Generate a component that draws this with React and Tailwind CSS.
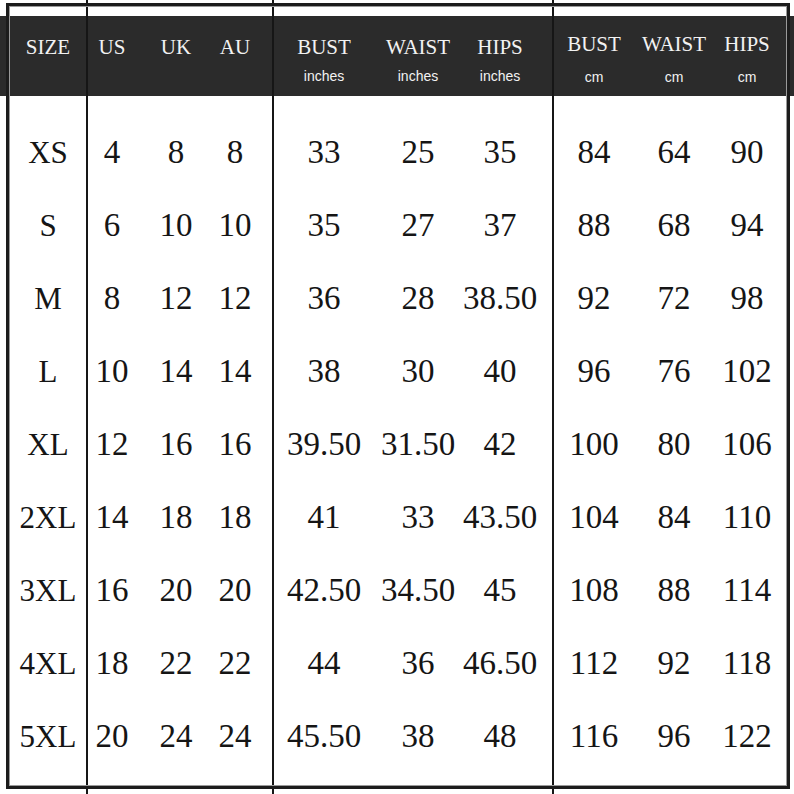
const rows = [
  ['XS', '4', '8', '8', '33', '25', '35', '84', '64', '90'],
  ['S', '6', '10', '10', '35', '27', '37', '88', '68', '94'],
  ['M', '8', '12', '12', '36', '28', '38.50', '92', '72', '98'],
  ['L', '10', '14', '14', '38', '30', '40', '96', '76', '102'],
  ['XL', '12', '16', '16', '39.50', '31.50', '42', '100', '80', '106'],
  ['2XL', '14', '18', '18', '41', '33', '43.50', '104', '84', '110'],
  ['3XL', '16', '20', '20', '42.50', '34.50', '45', '108', '88', '114'],
  ['4XL', '18', '22', '22', '44', '36', '46.50', '112', '92', '118'],
  ['5XL', '20', '24', '24', '45.50', '38', '48', '116', '96', '122'],
]

const serif = "font-['Liberation_Serif',serif]"
const sans = "font-['Liberation_Sans',Arial,sans-serif]"

function Cell({ children, size = 'text-[33px]' }) {
  return (
    <div className={`flex h-[73px] items-center justify-center whitespace-nowrap leading-none text-[#151515] ${serif} ${size}`}>
      {children}
    </div>
  )
}

function HeadLabel({ children, sub, subGap, top }) {
  return (
    <div className={`flex flex-col items-center whitespace-nowrap ${top}`}>
      <span className={`text-[21px] leading-none text-[#f2f2f2] ${serif}`}>{children}</span>
      {sub && (
        <span className={`text-[14px] leading-none text-[#f2f2f2] ${sans} ${subGap}`}>{sub}</span>
      )}
    </div>
  )
}

export default function App() {
  return (
    <div className="relative flex h-[794px] w-[794px] overflow-hidden bg-white">
      {/* size */}
      <div className="flex h-full w-[86px] flex-col">
        <div className="h-[16px]" />
        <div className="flex h-[80px] justify-center bg-[#2b2b2b] pl-[10px]">
          <HeadLabel top="pt-[21px]">SIZE</HeadLabel>
        </div>
        <div className="flex flex-col pl-[10px] pt-[20px]">
          {rows.map((r) => (
            <Cell key={r[0]} size="text-[31px]">{r[0]}</Cell>
          ))}
        </div>
      </div>

      {/* us / uk / au */}
      <div className="flex h-full w-[186px] flex-col border-l-2 border-[#161616]">
        <div className="h-[16px]" />
        <div className="grid h-[80px] grid-cols-[48px_80px_38px] bg-[#2b2b2b]">
          {['US', 'UK', 'AU'].map((h) => (
            <div key={h} className="flex justify-center">
              <HeadLabel top="pt-[21px]">{h}</HeadLabel>
            </div>
          ))}
        </div>
        <div className="grid grid-cols-[48px_80px_38px] pt-[20px]">
          {rows.map((r) =>
            r.slice(1, 4).map((v, i) => <Cell key={r[0] + i}>{v}</Cell>)
          )}
        </div>
      </div>

      {/* inches */}
      <div className="flex h-full w-[280px] flex-col border-l-2 border-[#161616]">
        <div className="h-[16px]" />
        <div className="grid h-[80px] grid-cols-[100px_88px_76px] bg-[#2b2b2b]">
          {['BUST', 'WAIST', 'HIPS'].map((h) => (
            <div key={h} className="flex justify-center">
              <HeadLabel top="pt-[21px]" sub="inches" subGap="mt-[11px]">{h}</HeadLabel>
            </div>
          ))}
        </div>
        <div className="grid grid-cols-[100px_88px_76px] pt-[20px]">
          {rows.map((r) =>
            r.slice(4, 7).map((v, i) => <Cell key={r[0] + i}>{v}</Cell>)
          )}
        </div>
      </div>

      {/* cm */}
      <div className="flex h-full flex-1 flex-col border-l-2 border-[#161616]">
        <div className="h-[16px]" />
        <div className="grid h-[80px] grid-cols-[80px_80px_66px] bg-[#2b2b2b]">
          {['BUST', 'WAIST', 'HIPS'].map((h) => (
            <div key={h} className="flex justify-center">
              <HeadLabel top="pt-[18px]" sub="cm" subGap="mt-[15px]">{h}</HeadLabel>
            </div>
          ))}
        </div>
        <div className="grid grid-cols-[80px_80px_66px] pt-[20px]">
          {rows.map((r) =>
            r.slice(7, 10).map((v, i) => <Cell key={r[0] + i}>{v}</Cell>)
          )}
        </div>
      </div>

      {/* outer frame */}
      <div className="pointer-events-none absolute left-[6px] top-[3px] h-[786px] w-[784px] border-[3px] border-[#1c1c1c] shadow-[inset_0_0_0_1px_#9a9a9a]" />
    </div>
  )
}
